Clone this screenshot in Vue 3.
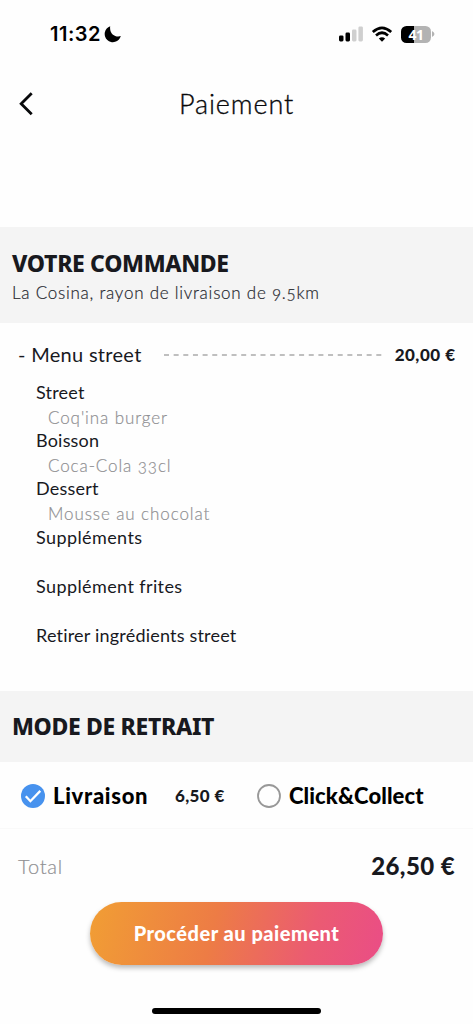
<script setup>
const lines = [
  { text: 'Street', kind: 'label' },
  { text: "Coq'ina burger", kind: 'value' },
  { text: 'Boisson', kind: 'label' },
  { text: 'Coca-Cola 33cl', kind: 'value' },
  { text: 'Dessert', kind: 'label' },
  { text: 'Mousse au chocolat', kind: 'value' },
  { text: 'Suppléments', kind: 'label spaced' },
  { text: 'Supplément frites', kind: 'label spaced' },
  { text: 'Retirer ingrédients street', kind: 'label' },
]
</script>

<template>
  <main class="screen">
    <div class="status">
      <span class="time">11:32</span>
      <svg class="moon" width="18" height="18" viewBox="0 0 18 18"><path d="M6.2 1.2A8.2 8.2 0 1 0 16.8 11.1C12.2 12.8 5 9.8 6.2 1.2Z" /></svg>
      <svg class="signal" width="24" height="16" viewBox="0 0 24 16">
        <rect x="0" y="9.4" width="4.5" height="6" rx="1.4" /><rect x="6.5" y="6.5" width="4.5" height="8.9" rx="1.4" />
        <rect class="off" x="13" y="3.5" width="4.5" height="11.9" rx="1.4" /><rect class="off" x="19.4" y="0.4" width="4.5" height="15" rx="1.4" />
      </svg>
      <svg class="wifi" width="22" height="17" viewBox="0 0 22 17">
        <path class="arc" d="M1.8 5.9Q11-2.3 20.2 5.9M5 9.4Q11 4.1 17 9.4" />
        <path d="M7.8 12.4Q11 9.9 14.2 12.4L11 15.8Z" />
      </svg>
      <span class="battery">41</span>
      <svg class="cap" width="3" height="6" viewBox="0 0 3 6"><path d="M0 0Q5 3 0 6Z" /></svg>
    </div>

    <header class="header">
      <svg class="back" width="16" height="26" viewBox="0 0 16 26"><path d="M13.7 2.3 3.2 12.8 13.7 23.3" /></svg>
      <h1>Paiement</h1>
    </header>

    <section class="band order">
      <h2>VOTRE COMMANDE</h2>
      <p>La Cosina, rayon de livraison de 9.5km</p>
    </section>

    <section class="items">
      <div class="item">
        <span class="item-name">- Menu street</span>
        <svg class="dashes" width="218" height="2"><path d="M0 1H218" /></svg>
        <strong class="price">20,00 €</strong>
      </div>
      <ul>
        <li v-for="line in lines" :key="line.text" :class="line.kind">{{ line.text }}</li>
      </ul>
    </section>

    <section class="band mode"><h2>MODE DE RETRAIT</h2></section>

    <section class="options">
      <svg class="radio" width="24" height="24" viewBox="0 0 24 24"><circle class="fill" cx="12" cy="12" r="12" /><path d="m4.8 12.3 4.6 4.9 9.9-10.3" /></svg>
      <strong class="delivery">Livraison</strong>
      <strong class="fee">6,50 €</strong>
      <svg class="radio" width="24" height="24" viewBox="0 0 24 24"><circle class="ring" cx="12" cy="12" r="11" /></svg>
      <strong class="collect">Click&amp;Collect</strong>
    </section>

    <footer>
      <div class="total"><span class="total-label">Total</span><strong class="sum">26,50 €</strong></div>
      <button>Procéder au paiement</button>
      <div class="home"></div>
    </footer>
  </main>
</template>

<style>
body { margin: 0; background: #fefefe; }
</style>

<style scoped>
* { box-sizing: border-box; }
.screen { height: 1024px; display: flex; flex-direction: column; background: #fefefe; color: #18191e; font-family: Lato, sans-serif; font-variant-ligatures: none; overflow: hidden; white-space: nowrap; }
h1, h2, p, ul { margin: 0; padding: 0; font-weight: 400; list-style: none; }
svg { display: block; flex: none; }
.status { height: 68px; display: flex; align-items: center; padding: 0 38px 0 50px; color: #000; }
.time { width: 53px; font: 600 20px/24px Inter, sans-serif; letter-spacing: 0.5px; }
.moon { margin-left: 1px; }
.signal { margin-left: auto; margin-top: -1px; }
.signal .off { fill: #cfcfcf; }
.wifi { margin-left: 8px; }
.arc { fill: none; stroke: #000; stroke-width: 2.7; }
.battery { width: 30px; height: 17px; margin-left: 8px; border-radius: 5.5px; background: linear-gradient(90deg, #000 13px, #b3b3b3 13px); color: #fff; text-align: center; font: 700 14px/17px "Noto Sans", sans-serif; letter-spacing: -0.4px; }
.cap { margin-left: 1px; fill: #b3b3b3; }
.header { height: 159px; display: grid; grid-template-columns: 36px 1fr 36px; align-items: start; padding: 23px 0 0 0; color: #08090b; }
.back { margin-left: 18px; fill: none; stroke: #08090b; stroke-width: 2.8; }
h1 { text-align: center; font: 300 27px/26px Lato, sans-serif; letter-spacing: 0.9px; -webkit-text-stroke: 0.35px #08090b; }
.band { background: #f4f4f4; padding-left: 12px; flex: none; }
.order { height: 96px; padding-top: 21px; }
h2 { font: 800 23px/30px "Noto Sans", sans-serif; letter-spacing: -0.35px; }
.order p { font-size: 17px; font-weight: 300; letter-spacing: 0.75px; line-height: 30px; color: #282a30; -webkit-text-stroke: 0.2px #282a30; font-variant-numeric: oldstyle-nums; }
.items { height: 368px; flex: none; }
.item { display: flex; align-items: center; height: 58px; padding: 6px 18px 0 18px; }
.item-name { margin-top: -2px; font-size: 20px; line-height: 28px; width: 146px; letter-spacing: 0.3px; }
.dashes { stroke: #aaa; stroke-width: 1.4; stroke-dasharray: 5 4.65; margin-top: -1px; }
.price { margin-left: auto; margin-right: -0.5px; font: 900 17px/24px Lato, sans-serif; letter-spacing: 0.5px; }
li { height: 24.1px; padding-left: 36px; font-size: 18px; line-height: 23px; letter-spacing: 0.2px; }
li.value { padding-left: 48px; color: #909093; -webkit-text-stroke: 0.2px #909093; font-size: 17px; line-height: 25px; font-weight: 300; letter-spacing: 0.9px; font-variant-numeric: oldstyle-nums; }
li.spaced { height: 49.2px; letter-spacing: 0.4px; }
.mode { height: 71px; padding-top: 20px; }
.options { height: 67px; flex: none; display: flex; align-items: center; padding: 2px 0 0 21px; color: #000; border-bottom: 1px solid #f9f9f9; }
.options strong { font: 900 22px/30px Lato, sans-serif; }
.radio .fill { fill: #4792ee; }
.radio path { fill: none; stroke: #fff; stroke-width: 2.3; }
.ring { fill: none; stroke: #989898; stroke-width: 1.8; }
.options .delivery { width: 122px; margin-left: 8px; letter-spacing: 0.7px; }
.options .fee { width: 82px; font-size: 17px; letter-spacing: 0.35px; color: #18191e; }
.options .collect { margin-left: 8px; letter-spacing: 0.1px; }
footer { display: flex; flex-direction: column; align-items: center; }
.total { align-self: stretch; height: 73px; display: flex; align-items: center; justify-content: space-between; padding: 0 18px 0 18px; }
.total-label { font-size: 20px; font-weight: 300; letter-spacing: 0.8px; color: #909093; -webkit-text-stroke: 0.2px #909093; }
.sum { font: 900 24px/30px Lato, sans-serif; letter-spacing: 0.4px; }
button { width: 293px; height: 63px; border: 0; border-radius: 32px; padding: 0 0 2px; color: #fff; background: linear-gradient(103deg, #f19e34, #ed7c45 42%, #eb5b72 75%, #ea4d86); box-shadow: 0 3px 5px #0004; font: 900 20px/28px Lato, sans-serif; letter-spacing: 0.5px; }
.home { width: 169px; height: 6px; margin-top: 43px; border-radius: 3px; background: #000; }
</style>
